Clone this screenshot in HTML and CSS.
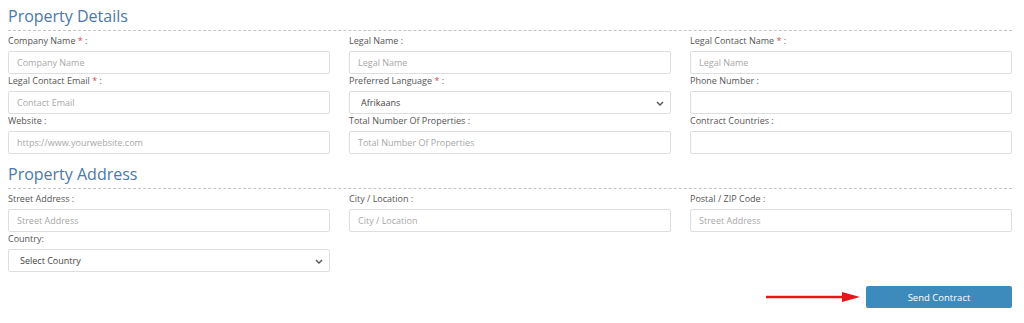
FILE: index.html
```html
<!DOCTYPE html>
<html lang="en">
<head>
    <meta charset="UTF-8">
    <meta name="viewport" content="width=device-width, initial-scale=1.0">
    <title>Property Details</title>
    <link rel="stylesheet" href="styles.css">
</head>
<body>

    <div class="container">
        <!-- Property Details -->
        <div class="section">
            <h3 class="section-title">Property Details</h3>
            <div class="grid">
                <div class="field">
                    <label>Company Name <span class="req">*</span> :</label>
                    <input type="text" placeholder="Company Name">
                </div>
                <div class="field">
                    <label>Legal Name :</label>
                    <input type="text" placeholder="Legal Name">
                </div>
                <div class="field">
                    <label>Legal Contact Name <span class="req">*</span> :</label>
                    <input type="text" placeholder="Legal Name">
                </div>
                <div class="field">
                    <label>Legal Contact Email <span class="req">*</span> :</label>
                    <input type="text" placeholder="Contact Email">
                </div>
                <div class="field">
                    <label>Preferred Language <span class="req">*</span> :</label>
                    <div class="select-wrap">
                        <select>
                            <option>Afrikaans</option>
                            <option>English</option>
                        </select>
                        <svg class="chevron" width="8" height="5" viewBox="0 0 8 5"><path d="M1 1l3 3 3-3" fill="none" stroke="#555" stroke-width="1.4"/></svg>
                    </div>
                </div>
                <div class="field">
                    <label>Phone Number :</label>
                    <input type="text">
                </div>
                <div class="field">
                    <label>Website :</label>
                    <input type="text" placeholder="https://www.yourwebsite.com">
                </div>
                <div class="field">
                    <label>Total Number Of Properties :</label>
                    <input type="text" placeholder="Total Number Of Properties">
                </div>
                <div class="field">
                    <label>Contract Countries :</label>
                    <input type="text">
                </div>
            </div>
        </div>

        <!-- Property Address -->
        <div class="section">
            <h3 class="section-title">Property Address</h3>
            <div class="grid">
                <div class="field">
                    <label>Street Address :</label>
                    <input type="text" placeholder="Street Address">
                </div>
                <div class="field">
                    <label>City / Location :</label>
                    <input type="text" placeholder="City / Location">
                </div>
                <div class="field">
                    <label>Postal / ZIP Code :</label>
                    <input type="text" placeholder="Street Address">
                </div>
                <div class="field">
                    <label>Country:</label>
                    <div class="select-wrap">
                        <select>
                            <option>Select Country</option>
                        </select>
                        <svg class="chevron" width="8" height="5" viewBox="0 0 8 5"><path d="M1 1l3 3 3-3" fill="none" stroke="#555" stroke-width="1.4"/></svg>
                    </div>
                </div>
            </div>
        </div>

        <div class="actions">
            <svg class="arrow" width="96" height="12" viewBox="0 0 96 12">
                <line x1="0" y1="6" x2="80" y2="6" stroke="#e8141a" stroke-width="2.5"/>
                <polygon points="76,1 94,6 76,11" fill="#e8141a"/>
            </svg>
            <button class="button">Send Contract</button>
        </div>
    </div>

</body>
</html>
```

FILE: styles.css
```css
body {
    font-family: 'Open Sans', 'Liberation Sans', sans-serif;
    margin: 0;
    padding: 0;
    background-color: #ffffff;
    color: #555;
}

.container {
    padding: 5px 12px 0 8px;
}

.section {
    margin-bottom: 9px;
}

.section-title {
    margin: 0;
    font-size: 16px;
    line-height: 22px;
    font-weight: 500;
    color: #4a78ac;
    padding-bottom: 3px;
    border-bottom: 1px dashed #c4c4c4;
}

.grid {
    display: grid;
    grid-template-columns: repeat(3, 1fr);
    column-gap: 19px;
    margin-top: 3px;
}

.field {
    display: flex;
    flex-direction: column;
    height: 40px;
}

label {
    display: block;
    font-size: 9px;
    line-height: 14px;
    height: 14px;
    margin-bottom: 3px;
    color: #555;
}

.req {
    color: #e8474d;
}

input[type="text"], select {
    display: block;
    box-sizing: border-box;
    width: 100%;
    height: 23px;
    margin: 0;
    border: 1px solid #dedede;
    border-radius: 2px;
    padding: 0 8px;
    font-family: inherit;
    font-size: 9px;
    color: #444;
    background-color: #fff;
    outline: none;
}

input::placeholder {
    color: #a8a8a8;
}

.select-wrap {
    position: relative;
    height: 23px;
}

select {
    appearance: none;
    -webkit-appearance: none;
    padding-left: 11px;
}

.chevron {
    position: absolute;
    right: 7px;
    top: 10px;
    pointer-events: none;
}

.actions {
    display: flex;
    justify-content: flex-end;
    align-items: center;
    gap: 4px;
    margin-top: 14px;
}

.button {
    width: 146px;
    height: 22px;
    border: none;
    border-radius: 2px;
    background-color: #3d8bbd;
    color: #fff;
    font-family: inherit;
    font-size: 9.5px;
    cursor: pointer;
}
```
